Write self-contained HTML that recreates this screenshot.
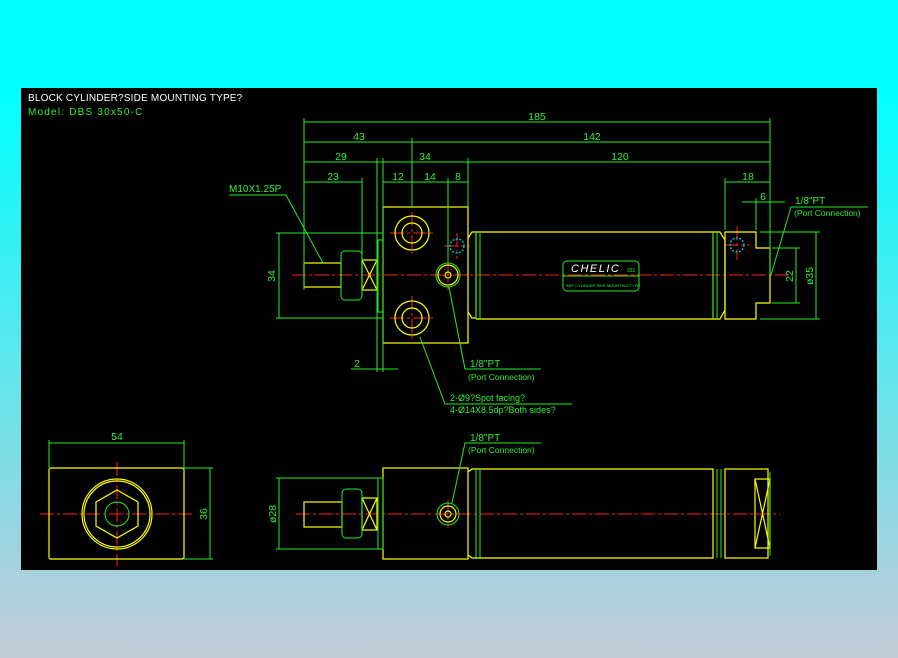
<!DOCTYPE html>
<html><head><meta charset="utf-8"><style>
html,body{margin:0;padding:0;width:898px;height:658px;overflow:hidden;background:linear-gradient(to bottom,#00ffff 0%,#00ffff 14%,#c4cad8 100%);}
svg{position:absolute;left:0;top:0}
text{font-family:"Liberation Sans",sans-serif;}
</style></head><body>
<svg width="898" height="658" viewBox="0 0 898 658" xmlns="http://www.w3.org/2000/svg">
<rect x="21" y="88" width="856" height="482" fill="#000"/>
<text x="28" y="101" fill="#fff" font-size="10" letter-spacing="0.2">BLOCK CYLINDER?SIDE MOUNTING TYPE?</text>
<text x="28" y="115" fill="#33ee33" font-size="10" letter-spacing="1.2">Model: DBS 30x50-C</text>

<g stroke="#ff2020" stroke-width="1" stroke-dasharray="14 3 3 3" fill="none">
<line x1="292" y1="275" x2="790" y2="275"/>
<line x1="390" y1="233" x2="436" y2="233"/><line x1="412" y1="212" x2="412" y2="254"/>
<line x1="390" y1="318" x2="436" y2="318"/><line x1="412" y1="296" x2="412" y2="340"/>
<line x1="448" y1="262" x2="448" y2="290"/>
<line x1="444" y1="246" x2="470" y2="246"/><line x1="457" y1="233" x2="457" y2="259"/>
<line x1="724" y1="245" x2="750" y2="245"/><line x1="737" y1="226" x2="737" y2="260"/>
<line x1="40" y1="514" x2="195" y2="514"/><line x1="117" y1="462" x2="117" y2="566"/>
<line x1="296" y1="514" x2="780" y2="514"/>
<line x1="448" y1="500" x2="448" y2="528"/>
</g>

<g stroke="#ffff00" stroke-width="1.2" fill="none">
<rect x="304" y="263" width="37" height="24"/>
<rect x="362" y="260" width="15" height="30"/>
<line x1="362" y1="260" x2="377" y2="290"/><line x1="377" y1="260" x2="362" y2="290"/>
<rect x="383" y="207" width="85" height="136"/>
<circle cx="412" cy="233" r="17"/><circle cx="412" cy="233" r="10"/>
<circle cx="412" cy="318" r="17"/><circle cx="412" cy="318" r="10"/>
<circle cx="448" cy="275" r="10"/><circle cx="448" cy="275" r="3"/>
<path d="M468 238 L472 232 L476 232 L476 318 L472 318 L468 312"/>
<path d="M476 232 L480 232 L713 232 L713 319 L480 319 L476 319"/>
<path d="M713 232 L720 232 L725 240 L725 310 L720 319 L713 319"/>
<path d="M725 232 L756 232 L756 248 L770 248 L770 303 L756 303 L756 319 L725 319 Z"/>
<rect x="49" y="468" width="135" height="91" rx="2"/>
<circle cx="117" cy="514" r="35"/><circle cx="117" cy="514" r="33"/>
<polygon points="117,490 138,502 138,526 117,538 96,526 96,502"/>
<rect x="304" y="502" width="38" height="25"/>
<rect x="362" y="498" width="15" height="32"/>
<line x1="362" y1="498" x2="377" y2="530"/><line x1="377" y1="498" x2="362" y2="530"/>
<rect x="383" y="468" width="85" height="91"/>
<circle cx="448" cy="514" r="8"/><circle cx="448" cy="514" r="3"/>
<path d="M468 472 L472 469 L480 469 L713 469 L713 558 L480 558 L472 558 L468 555"/>
<rect x="725" y="469" width="43" height="89"/>
<rect x="755" y="479" width="15" height="69"/>
<line x1="755" y1="479" x2="770" y2="548"/><line x1="770" y1="479" x2="755" y2="548"/>
</g>

<g stroke="#22ee22" stroke-width="1" fill="none">
<rect x="341" y="251" width="21" height="49" rx="4"/>
<rect x="378" y="240" width="5" height="72"/>
<circle cx="448" cy="275" r="12"/>
<line x1="480" y1="232" x2="480" y2="319"/><line x1="476" y1="232" x2="476" y2="319"/>
<line x1="713" y1="232" x2="713" y2="319"/><line x1="717" y1="232" x2="717" y2="319"/>
<rect x="563" y="261" width="76" height="30" rx="4"/>
<line x1="563" y1="276" x2="639" y2="276"/>
<circle cx="117" cy="514" r="12"/>
<rect x="342" y="489" width="20" height="49" rx="4"/>
<rect x="378" y="478" width="5" height="71"/>
<circle cx="448" cy="514" r="11"/>
<line x1="476" y1="469" x2="476" y2="558"/><line x1="480" y1="469" x2="480" y2="558"/>
<line x1="717" y1="469" x2="717" y2="558"/><line x1="721" y1="469" x2="721" y2="558"/>
<line x1="770" y1="472" x2="770" y2="556"/>
<line x1="304" y1="122" x2="770" y2="122"/>
<line x1="304" y1="142" x2="770" y2="142"/>
<line x1="304" y1="162" x2="770" y2="162"/>
<line x1="304" y1="182" x2="362" y2="182"/>
<line x1="383" y1="182" x2="468" y2="182"/>
<line x1="725" y1="182" x2="770" y2="182"/>
<line x1="742" y1="202" x2="785" y2="202"/>
<line x1="304" y1="118" x2="304" y2="290"/>
<line x1="770" y1="118" x2="770" y2="275"/>
<line x1="412" y1="138" x2="412" y2="207"/>
<line x1="377" y1="158" x2="377" y2="372"/>
<line x1="383" y1="158" x2="383" y2="372"/>
<line x1="362" y1="178" x2="362" y2="262"/>
<line x1="468" y1="158" x2="468" y2="207"/>
<line x1="448" y1="178" x2="448" y2="262"/>
<line x1="725" y1="178" x2="725" y2="230"/>
<line x1="756" y1="198" x2="756" y2="230"/>
<line x1="276" y1="233" x2="383" y2="233"/><line x1="276" y1="318" x2="383" y2="318"/>
<line x1="279" y1="233" x2="279" y2="318"/>
<line x1="351" y1="369" x2="398" y2="369"/>
<line x1="760" y1="232" x2="820" y2="232"/><line x1="760" y1="319" x2="820" y2="319"/>
<line x1="772" y1="248" x2="800" y2="248"/><line x1="772" y1="303" x2="800" y2="303"/>
<line x1="796" y1="248" x2="796" y2="303"/><line x1="816" y1="232" x2="816" y2="319"/>
<polyline points="229,195 286,195 323,263"/>
<polyline points="868,207 791,207 771,275"/>
<polyline points="541,369 465,369 449,287"/>
<polyline points="572,404 445,404 420,337"/>
<polyline points="541,443 465,443 452,503"/>
<line x1="49" y1="443" x2="184" y2="443"/>
<line x1="49" y1="440" x2="49" y2="468"/><line x1="184" y1="440" x2="184" y2="468"/>
<line x1="184" y1="468" x2="213" y2="468"/><line x1="184" y1="559" x2="213" y2="559"/>
<line x1="210" y1="468" x2="210" y2="559"/>
<line x1="276" y1="478" x2="379" y2="478"/><line x1="276" y1="549" x2="379" y2="549"/>
<line x1="279" y1="478" x2="279" y2="549"/>
</g>
<g stroke="#00e0ff" stroke-width="1.2" fill="none" stroke-dasharray="2 1.5">
<circle cx="457" cy="246" r="7"/><circle cx="737" cy="245" r="7"/>
</g>

<g fill="#33ee33" font-size="10.5" text-anchor="middle">
<text x="537" y="120">185</text>
<text x="359" y="140">43</text>
<text x="592" y="140">142</text>
<text x="341" y="160">29</text>
<text x="425" y="160">34</text>
<text x="620" y="160">120</text>
<text x="333" y="180">23</text>
<text x="398" y="180">12</text>
<text x="430" y="180">14</text>
<text x="458" y="180">8</text>
<text x="748" y="180">18</text>
<text x="763" y="200">6</text>
<text x="357" y="367">2</text>
<text x="117" y="440">54</text>
<text transform="translate(275,276) rotate(-90)">34</text>
<text transform="translate(793,276) rotate(-90)">22</text>
<text transform="translate(813,276) rotate(-90)">ø35</text>
<text transform="translate(207,514) rotate(-90)">36</text>
<text transform="translate(276,514) rotate(-90)">ø28</text>
</g>
<g fill="#33ee33" font-size="10">
<text x="229" y="192">M10X1.25P</text>
<text x="795" y="204">1/8"PT</text>
<text x="794" y="216" font-size="8.5">(Port Connection)</text>
<text x="470" y="367">1/8"PT</text>
<text x="468" y="380" font-size="8.5">(Port Connection)</text>
<text x="450" y="401" font-size="9">2-Ø9?Spot facing?</text>
<text x="450" y="413" font-size="9">4-Ø14X8.5dp?Both sides?</text>
<text x="470" y="441">1/8"PT</text>
<text x="468" y="453" font-size="8.5">(Port Connection)</text>
<text x="571" y="272" font-style="italic" font-size="11" letter-spacing="1.5" fill="#fff">CHELIC</text>
<text x="627" y="272" font-size="5">331</text>
<text x="566" y="287" font-size="4">BSP CYLINDER SIDE MOUNTING TYPE</text>
</g>
</svg>
</body></html>
